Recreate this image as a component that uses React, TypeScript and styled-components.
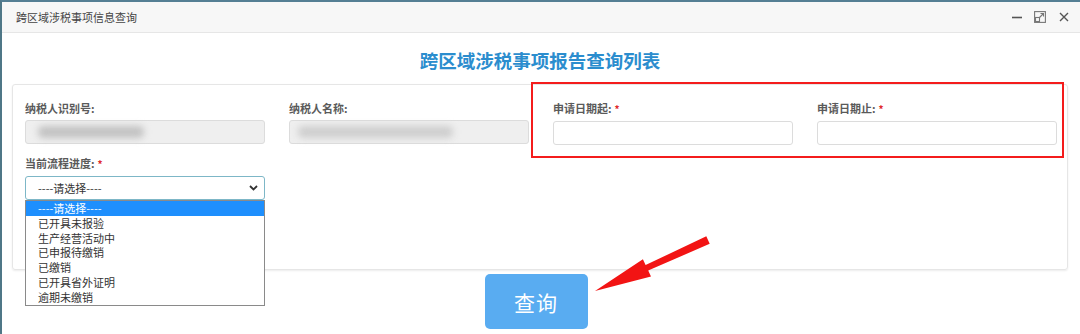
import styled, { createGlobalStyle } from 'styled-components';

const GlobalStyle = createGlobalStyle`
	body {
		margin: 0;
		background: #fff;
		font-family: 'Noto Sans CJK SC', 'Liberation Sans', sans-serif;
	}
`;

const Window = styled.div`
	position: relative;
	width: 1080px;
	height: 334px;
	box-sizing: border-box;
	border-top: 2px solid #557f94;
	border-left: 2px solid #4f7787;
	background: #fff;
	overflow: hidden;
`;

const TitleBar = styled.div`
	display: flex;
	align-items: center;
	justify-content: space-between;
	height: 30px;
	padding: 0 10px 0 14px;
	background: #f7f7f7;
	border-bottom: 1px solid #e6e6e6;
`;

const WindowTitle = styled.div`
	font-size: 11px;
	color: #444;
`;

const WindowTools = styled.div`
	display: flex;
	align-items: center;
	gap: 9px;
	color: #666;
`;

const ToolIcon = styled.svg`
	display: block;
	width: 12px;
	height: 12px;
`;

const Body = styled.div`
	padding: 0 12px 0 10px;
`;

const Heading = styled.h1`
	margin: 0;
	padding: 15px 0 12px;
	line-height: 24px;
	font-size: 18.5px;
	font-weight: bold;
	text-align: center;
	color: #2b8dce;
`;

const Panel = styled.div`
	height: 186px;
	box-sizing: border-box;
	padding: 16px 11px 0 12px;
	border: 1px solid #e6e6e6;
	border-radius: 3px;
	box-shadow: 0 1px 2px rgba(0, 0, 0, 0.08);
`;

const FieldGrid = styled.div`
	display: grid;
	grid-template-columns: repeat(4, 240px);
	column-gap: 24px;
	row-gap: 11px;
`;

const DateGroup = styled.div`
	position: relative;
	grid-column: span 2;
	display: grid;
	grid-template-columns: repeat(2, 240px);
	column-gap: 24px;

	&::before {
		content: '';
		position: absolute;
		top: -19px;
		left: -22px;
		right: -7px;
		bottom: -13px;
		border: 2px solid #f41c1c;
		pointer-events: none;
	}
`;

const Field = styled.div`
	position: relative;
	display: flex;
	flex-direction: column;
`;

const Label = styled.div`
	font-size: 11px;
	line-height: 14px;
	font-weight: bold;
	color: #5a5a5a;
	margin-bottom: 5px;
`;

const Required = styled.span`
	color: #e02a2a;
	margin-left: 3px;
	font-size: 10px;
`;

const Input = styled.div<{ $disabled?: boolean }>`
	display: flex;
	align-items: center;
	height: 24px;
	box-sizing: border-box;
	padding: 0 12px;
	border: 1px solid #dcdcdc;
	border-radius: 3px;
	background: ${(p) => (p.$disabled ? '#efefef' : '#fff')};
`;

const Blurred = styled.span<{ $tone: string }>`
	display: block;
	height: 12px;
	border-radius: 5px;
	background: ${(p) => p.$tone};
	filter: blur(3.5px);
`;

const Select = styled.div`
	display: flex;
	align-items: center;
	justify-content: space-between;
	height: 24px;
	box-sizing: border-box;
	padding: 0 6px 0 12px;
	border: 1px solid #7db7c7;
	border-radius: 3px;
	font-size: 11px;
	color: #333;
`;

const OptionList = styled.div`
	position: absolute;
	top: 100%;
	left: 0;
	width: 240px;
	box-sizing: border-box;
	border: 1px solid #8a8a8a;
	background: #fff;
	z-index: 2;
`;

const Option = styled.div<{ $active?: boolean }>`
	height: 14.8px;
	line-height: 14.8px;
	padding-left: 12px;
	font-size: 11px;
	color: ${(p) => (p.$active ? '#fff' : '#333')};
	background: ${(p) => (p.$active ? '#1e8ffd' : 'transparent')};
`;

const ButtonRow = styled.div`
	display: flex;
	justify-content: center;
	padding: 4px 8px 0 0;
`;

const QueryButton = styled.button`
	width: 103px;
	height: 55px;
	border: none;
	border-radius: 5px;
	background: #59acf1;
	color: #fff;
	font-family: inherit;
	font-size: 21px;
	letter-spacing: 1px;
`;

const Arrow = styled.svg`
	position: absolute;
	left: 0;
	top: 0;
	pointer-events: none;
`;

const options = ['----请选择----', '已开具未报验', '生产经营活动中', '已申报待缴销', '已缴销', '已开具省外证明', '逾期未缴销'];

export default function App() {
	return (
		<>
			<GlobalStyle />
			<Window>
				<TitleBar>
					<WindowTitle>跨区域涉税事项信息查询</WindowTitle>
					<WindowTools>
						<ToolIcon viewBox='0 0 12 12'>
							<line x1='1' y1='6.5' x2='11' y2='6.5' stroke='#555' strokeWidth='1.6' />
						</ToolIcon>
						<ToolIcon viewBox='0 0 12 12' style={{ marginLeft: 2 }}>
							<rect x='0.6' y='0.6' width='10.8' height='10.8' fill='none' stroke='#777' strokeWidth='1.1' />
							<rect x='1.5' y='6.5' width='4' height='4' fill='none' stroke='#777' strokeWidth='1.1' />
							<line x1='5.5' y1='6.5' x2='9.5' y2='2.5' stroke='#777' strokeWidth='1.1' />
							<polyline points='6.5,2.5 9.5,2.5 9.5,5.5' fill='none' stroke='#777' strokeWidth='1.1' />
						</ToolIcon>
						<ToolIcon viewBox='0 0 12 12' style={{ marginLeft: 3 }}>
							<path d='M2 2 L10 10 M10 2 L2 10' stroke='#555' strokeWidth='1.4' />
						</ToolIcon>
					</WindowTools>
				</TitleBar>
				<Body>
					<Heading>跨区域涉税事项报告查询列表</Heading>
					<Panel>
						<FieldGrid>
							<Field>
								<Label>纳税人识别号:</Label>
								<Input $disabled>
									<Blurred $tone='#c2c2c2' style={{ width: 106 }} />
								</Input>
							</Field>
							<Field>
								<Label>纳税人名称:</Label>
								<Input $disabled style={{ paddingLeft: 8 }}>
									<Blurred $tone='#cecece' style={{ width: 155 }} />
								</Input>
							</Field>
							<DateGroup>
								<Field>
									<Label>
										申请日期起:<Required>*</Required>
									</Label>
									<Input />
								</Field>
								<Field>
									<Label>
										申请日期止:<Required>*</Required>
									</Label>
									<Input />
								</Field>
							</DateGroup>
							<Field>
								<Label>
									当前流程进度:<Required>*</Required>
								</Label>
								<Select>
									<span>----请选择----</span>
									<svg width='9' height='6' viewBox='0 0 9 6'>
										<polyline points='1,1 4.5,4.5 8,1' fill='none' stroke='#333' strokeWidth='1.8' />
									</svg>
								</Select>
								<OptionList>
									{options.map((o, i) => (
										<Option key={o} $active={i === 0}>
											{o}
										</Option>
									))}
								</OptionList>
							</Field>
						</FieldGrid>
					</Panel>
					<ButtonRow>
						<QueryButton>查询</QueryButton>
					</ButtonRow>
				</Body>
				<Arrow width='1080' height='334' viewBox='0 0 1080 334'>
					<polygon
						points='595,291 651,276.5 648.2,270.5 709.7,243.8 706.3,236.2 645.6,265.1 642.9,259.2'
						fill='#f21414'
						transform='translate(-2 -2)'
					/>
				</Arrow>
			</Window>
		</>
	);
}
